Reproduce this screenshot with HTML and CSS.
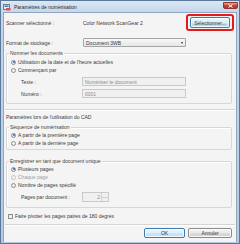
FILE: index.html
```html
<!DOCTYPE html>
<html>
<head>
  <meta charset="UTF-8">
  <title>Paramètres de numérisation</title>
  <link rel="stylesheet" href="styles.css">
</head>
<body>
  <div class="window">
    <div class="titlebar">
      <svg class="app-icon" width="8" height="8" viewBox="0 0 8 8">
        <rect x="0.5" y="1.5" width="6" height="5" fill="#e8eef5" stroke="#6b7c8f"/>
        <rect x="1.5" y="2.5" width="4" height="1.5" fill="#3b7dc4"/>
        <path d="M3 5 L7.5 5 L7.5 7.5 L3 7.5 Z" fill="#d9534f"/>
      </svg>
      <span class="title">Paramètres de numérisation</span>
      <div class="close-btn">
        <svg width="5" height="4" viewBox="0 0 5 4"><path d="M0.5 0.5 L4.5 3.5 M4.5 0.5 L0.5 3.5" stroke="#fff" stroke-width="1"/></svg>
      </div>
    </div>

    <div class="client">
      <div class="row-scanner">
        <span class="label">Scanner sélectionné :</span>
        <span class="value">Color Network ScanGear 2</span>
        <div class="highlight">
          <button class="button btn-select">Sélectionner...</button>
        </div>
      </div>

      <div class="row-format">
        <span class="label">Format de stockage :</span>
        <div class="select">
          <span>Document 3WB</span>
          <span class="arrow"></span>
        </div>
      </div>

      <fieldset class="group group-names">
        <legend>Nommer les documents</legend>
        <label class="radio-row"><span class="radio checked"></span>Utilisation de la date et de l'heure actuelles</label>
        <label class="radio-row"><span class="radio"></span>Commençant par</label>
        <div class="field-row">
          <span class="field-label">Texte :</span>
          <div class="textbox">Numériser le document</div>
        </div>
        <div class="field-row">
          <span class="field-label">Numéro :</span>
          <div class="textbox">0001</div>
        </div>
      </fieldset>

      <div class="separator"></div>

      <div class="section-title">Paramètres lors de l'utilisation du CAD</div>

      <fieldset class="group group-seq">
        <legend>Séquence de numérisation</legend>
        <label class="radio-row"><span class="radio checked"></span>A partir de la première page</label>
        <label class="radio-row"><span class="radio"></span>A partir de la dernière page</label>
      </fieldset>

      <fieldset class="group group-single">
        <legend>Enregistrer en tant que document unique</legend>
        <label class="radio-row"><span class="radio checked"></span>Plusieurs pages</label>
        <label class="radio-row disabled"><span class="radio"></span>Chaque page</label>
        <label class="radio-row"><span class="radio"></span>Nombre de pages spécifié</label>
        <div class="field-row field-pages">
          <span class="field-label">Pages par document :</span>
          <div class="spinner">
            <div class="spin-value">2</div>
            <div class="spin-arrows">
              <span class="up"></span>
              <span class="down"></span>
            </div>
          </div>
        </div>
      </fieldset>

      <label class="check-row"><span class="checkbox"></span>Faire pivoter les pages paires de 180 degrés</label>

      <div class="separator sep-bottom"></div>

      <div class="buttons">
        <button class="button btn-ok">OK</button>
        <button class="button btn-cancel">Annuler</button>
      </div>
    </div>
  </div>
</body>
</html>
```

FILE: styles.css
```css
body {
  margin: 0;
  background-color: #ffffff;
  font-family: "Liberation Sans", Arial, sans-serif;
  font-size: 5px;
  color: #3a3a3a;
}

.window {
  width: 240px;
  height: 244px;
  box-sizing: border-box;
  border: 1px solid #5a7898;
  background: linear-gradient(#dbe7f4, #c3d6eb 12px, #b4cae3);
  display: flex;
  flex-direction: column;
}

.titlebar {
  height: 11px;
  display: flex;
  align-items: center;
  padding-left: 2px;
}

.app-icon {
  flex: none;
}

.title {
  margin-left: 3px;
  color: #2a2a2a;
}

.close-btn {
  margin-left: auto;
  margin-right: 1px;
  align-self: flex-start;
  margin-top: 1px;
  width: 15px;
  height: 7px;
  box-sizing: border-box;
  border: 1px solid #8a3a33;
  border-radius: 0 0 2px 2px;
  background: linear-gradient(#e9a99a, #c9463a 50%, #b8322a);
  display: flex;
  align-items: center;
  justify-content: center;
}

.close-btn svg {
  display: block;
}

.client {
  margin: 0 2px 0 2px;
  height: 229px;
  background-color: #f4f4f4;
  border: 1px solid #8fa7c2;
  border-bottom: none;
  padding: 0 2px 0 2px;
  display: flex;
  flex-direction: column;
  overflow: hidden;
}

.label {
  width: 77px;
  flex: none;
}

.row-scanner {
  height: 19px;
  display: flex;
  align-items: center;
}

.highlight {
  margin-left: auto;
  border: 2px solid #e21c1c;
  border-radius: 3px;
  padding: 1px 2px;
  display: flex;
}

.button {
  font-family: inherit;
  font-size: 5px;
  color: #3a3a3a;
  padding: 0;
  margin: 0;
  border: 1px solid #8a8a8a;
  border-radius: 2px;
  background: linear-gradient(#f6f6f6, #e8e8e8 50%, #dddddd 51%, #cfcfcf);
  box-shadow: inset 0 0 0 1px rgba(255, 255, 255, 0.8);
  height: 11px;
}

.btn-select {
  width: 40px;
  border-color: #3d7bad;
  background: linear-gradient(#eaf6fd, #d9f0fc 50%, #bee6fd 51%, #a7d9f5);
}

.row-format {
  margin-top: 6px;
  height: 9px;
  display: flex;
  align-items: center;
}

.select {
  width: 103px;
  height: 9px;
  box-sizing: border-box;
  border: 1px solid #a5a5a5;
  border-radius: 1px;
  background: linear-gradient(#f8f8f8, #e6e6e6);
  display: flex;
  align-items: center;
  padding-left: 2px;
}

.select .arrow {
  margin-left: auto;
  margin-right: 2px;
  width: 0;
  height: 0;
  border-left: 1.5px solid transparent;
  border-right: 1.5px solid transparent;
  border-top: 2px solid #333;
}

.group {
  margin: 0;
  padding: 0;
  border: 1px solid #d3d8dd;
  border-radius: 2px;
  box-shadow: inset 1px 1px 0 #ffffff;
  min-width: 0;
}

.group legend {
  padding: 0 1px;
  margin-left: 2px;
  height: 6px;
  line-height: 6px;
}

.group-names {
  margin: 3px 2px 0 0;
  padding: 2px 0 5px 0;
}

.radio-row {
  display: flex;
  align-items: center;
  height: 8px;
  margin-left: 4px;
}

.radio-row.disabled {
  color: #a0a0a0;
}

.radio {
  width: 5px;
  height: 5px;
  box-sizing: border-box;
  border: 1px solid #8e8f8f;
  border-radius: 50%;
  background: radial-gradient(#ffffff, #dcdcdc);
  margin-right: 2px;
  display: flex;
  align-items: center;
  justify-content: center;
}

.radio.checked::after {
  content: "";
  width: 2px;
  height: 2px;
  border-radius: 50%;
  background: #2465b8;
}

.radio-row.disabled .radio {
  border-color: #c4c4c4;
  background: #f4f4f4;
}

.field-row {
  display: flex;
  align-items: center;
  margin-top: 3px;
  height: 9px;
}

.field-label {
  width: 61px;
  margin-left: 14px;
  flex: none;
}

.textbox {
  width: 104px;
  height: 9px;
  box-sizing: border-box;
  border: 1px solid #c9c9c9;
  background: #f0f0f0;
  color: #8c8c8c;
  padding-left: 2px;
  display: flex;
  align-items: center;
}

.separator {
  margin: 5px -1px 0 -1px;
  height: 1px;
  border-top: 1px solid #d4d4d4;
  background: #ffffff;
}

.section-title {
  margin-top: 2px;
  height: 8px;
  line-height: 8px;
}

.group-seq {
  margin: 3px 2px 0 0;
  padding: 1px 0 2px 0;
}

.group-single {
  margin: 8px 2px 0 0;
  padding: 1px 0 5px 0;
}

.field-pages {
  height: 10px;
}

.spinner {
  width: 27px;
  height: 10px;
  box-sizing: border-box;
  border: 1px solid #c9c9c9;
  background: #f0f0f0;
  display: flex;
}

.spin-value {
  flex: 1;
  text-align: right;
  padding-right: 1px;
  color: #8c8c8c;
  line-height: 8px;
}

.spin-arrows {
  width: 6px;
  border-left: 1px solid #d2d2d2;
  display: flex;
  flex-direction: column;
}

.spin-arrows span {
  flex: 1;
}

.spin-arrows .up {
  border-bottom: 1px solid #d2d2d2;
}

.check-row {
  margin-top: 4px;
  height: 8px;
  display: flex;
  align-items: center;
  margin-left: 2px;
}

.checkbox {
  width: 5px;
  height: 5px;
  box-sizing: border-box;
  border: 1px solid #8e8f8f;
  background: linear-gradient(#e3e3e3, #ffffff);
  margin-right: 2px;
}

.sep-bottom {
  margin-top: 4px;
}

.buttons {
  margin-top: 2px;
  display: flex;
  justify-content: flex-end;
  gap: 3px;
  margin-right: 2px;
}

.btn-ok {
  width: 41px;
  height: 10px;
  border-color: #3d7bad;
  background: linear-gradient(#eaf6fd, #dceffb 50%, #c9e6f9 51%, #bcdff7);
}

.btn-cancel {
  width: 44px;
  height: 10px;
}
```
